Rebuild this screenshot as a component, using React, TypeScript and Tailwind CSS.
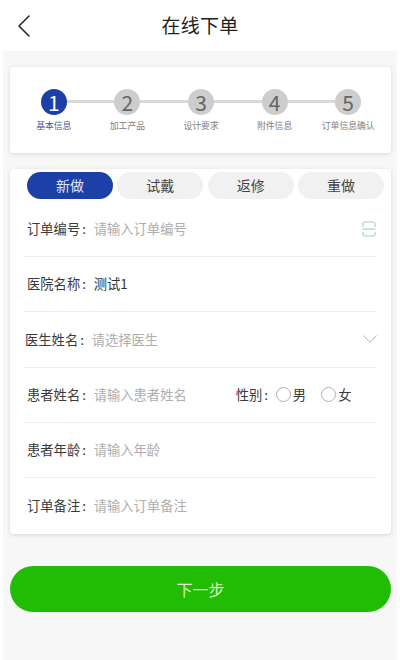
import React from 'react';
import { ChevronLeft, ChevronDown } from 'lucide-react';

const STEPS = [
  { num: '1', label: '基本信息', active: true },
  { num: '2', label: '加工产品', active: false },
  { num: '3', label: '设计要求', active: false },
  { num: '4', label: '附件信息', active: false },
  { num: '5', label: '订单信息确认', active: false },
];

const TABS = ['新做', '试戴', '返修', '重做'];

const Colon = () => <span className="w-[13.5px] pl-[2px] shrink-0 text-[#333]">:</span>;

const Field: React.FC<{ label: string; className?: string; children: React.ReactNode }> = ({ label, className = '', children }) => (
  <div className={`flex items-center h-[55.4px] border-b border-[#ececec] last:border-b-0 text-[13.3px] ${className}`}>
    <span className="text-[#3a3a3a] whitespace-nowrap">{label}</span>
    <Colon />
    {children}
  </div>
);

const Placeholder: React.FC<{ children: React.ReactNode }> = ({ children }) => (
  <span className="text-[#aeaeae] whitespace-nowrap">{children}</span>
);

const Radio: React.FC<{ label: string }> = ({ label }) => (
  <span className="flex items-center gap-[2px]">
    <span className="w-[15px] h-[15px] rounded-full border border-[#b0b0b0] bg-white" />
    <span className="text-[#3a3a3a]">{label}</span>
  </span>
);

export default function App() {
  return (
    <div className="w-[400px] h-[660px] overflow-hidden bg-white font-['Noto_Sans_CJK_SC','Noto_Sans',sans-serif]">
      {/* Header */}
      <header className="h-[51px] flex items-center justify-center relative bg-white">
        <ChevronLeft className="absolute left-[4px] top-[6px] w-[40px] h-[40px] text-[#222]" strokeWidth={0.9} />
        <h1 className="text-[19px] text-[#222] font-normal tracking-[0.3px]">在线下单</h1>
      </header>

      <main className="mx-[3px] h-[609px] bg-[#f7f7f7] pl-[7px] pr-[6px] pt-[16px]">
        {/* Steps */}
        <section className="h-[86px] bg-white rounded-[4px] shadow-[0_1px_4px_rgba(0,0,0,0.13)] pl-[7px] pr-[6px] pt-[22px]">
          <div className="relative grid grid-cols-5">
            <div className="absolute left-[37px] right-[37px] top-[11px] h-[3px] bg-[#d9d9d9]" />
            {STEPS.map((step) => (
              <div key={step.num} className="relative flex flex-col items-center">
                <div
                  className={`w-[26px] h-[26px] rounded-full flex items-center justify-center text-[21px] leading-none ${
                    step.active ? 'bg-[#1c3fa8] text-white' : 'bg-[#cdcdcd] text-[#666]'
                  }`}
                >
                  {step.num}
                </div>
                <span className={`mt-[4px] text-[8.8px] leading-[13px] whitespace-nowrap ${step.active ? 'text-[#3f5a9f]' : 'text-[#808080]'}`}>
                  {step.label}
                </span>
              </div>
            ))}
          </div>
        </section>

        {/* Form */}
        <section className="mt-[16px] h-[365px] bg-white rounded-[4px] shadow-[0_1px_4px_rgba(0,0,0,0.13)] pt-[3px] px-[14px]">
          <div className="grid grid-cols-4 gap-[4.5px] pl-[3px] w-[360px]">
            {TABS.map((tab, i) => (
              <div
                key={tab}
                className={`h-[27px] rounded-full flex items-center justify-center text-[14px] ${
                  i === 0 ? 'bg-[#1c3fa8] text-[#dfe6f7]' : 'bg-[#f1f1f1] text-[#444]'
                }`}
              >
                {tab}
              </div>
            ))}
          </div>

          <div className="mt-[2.5px] w-[353px]">
            <Field label="订单编号" className="pl-[3px]">
              <Placeholder>请输入订单编号</Placeholder>
              <svg className="ml-auto mr-[1px]" width="14" height="16" viewBox="0 0 14 16" fill="none" stroke="#a3cdd0" strokeWidth="1.1">
                <path d="M1 6V2.5Q1 1 2.5 1H11.5Q13 1 13 2.5V6" />
                <path d="M0.5 8H13.5" />
                <path d="M1 11V13.5Q1 15 2.5 15H11.5Q13 15 13 13.5V11" />
              </svg>
            </Field>
            <Field label="医院名称" className="pl-[3px]">
              <span className="text-[#333]">测试1</span>
            </Field>
            <Field label="医生姓名" className="pl-[1px]">
              <Placeholder>请选择医生</Placeholder>
              <ChevronDown className="ml-auto -mr-[6px] w-[26px] h-[26px] text-[#b0b0b0]" strokeWidth={0.9} />
            </Field>
            <Field label="患者姓名" className="pl-[3px]">
              <Placeholder>请输入患者姓名</Placeholder>
              <span className="ml-[49px] text-[#3a3a3a]">性别</span>
              <Colon />
              <span className="flex items-center gap-[15px]">
                <Radio label="男" />
                <Radio label="女" />
              </span>
            </Field>
            <Field label="患者年龄" className="pl-[3px]">
              <Placeholder>请输入年龄</Placeholder>
            </Field>
            <Field label="订单备注" className="pl-[3px]">
              <Placeholder>请输入订单备注</Placeholder>
            </Field>
          </div>
        </section>

        <button className="mt-[32px] w-full h-[46px] rounded-full bg-[#21bd05] text-[#d6f5c8] text-[16px] flex items-center justify-center">
          下一步
        </button>
      </main>
    </div>
  );
}
